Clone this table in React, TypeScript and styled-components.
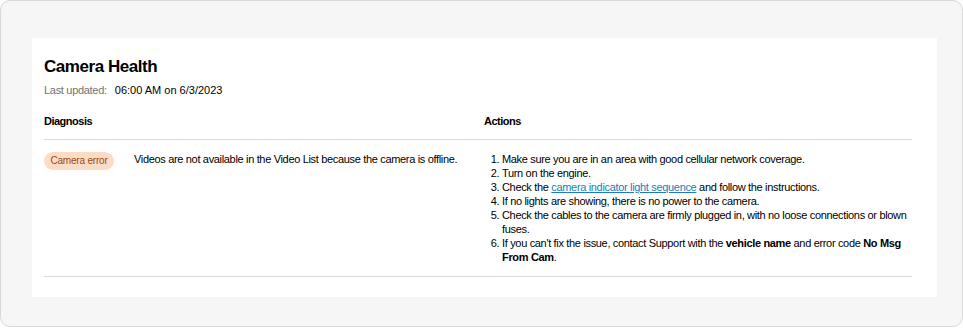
import React from "react";
import styled, { createGlobalStyle } from "styled-components";

const Global = createGlobalStyle`
  html, body { margin: 0; padding: 0; background: #ffffff; }
  body { font-family: "Liberation Sans", Arial, Helvetica, sans-serif; color: #000; }
  * { box-sizing: border-box; }
`;

const Frame = styled.div`
  width: 963px;
  height: 327px;
  background: #f6f6f6;
  border: 1px solid #d9d9d9;
  border-radius: 10px;
  padding: 37px 25px 0 31px;
`;

const Card = styled.section`
  background: #ffffff;
  height: 259px;
  padding: 19px 25px 0 12px;
`;

const Title = styled.h1`
  margin: 0;
  font-size: 17px;
  line-height: 20px;
  font-weight: 700;
  letter-spacing: -0.45px;
`;

const Updated = styled.div`
  margin-top: 6px;
  font-size: 11px;
  line-height: 14px;
  display: flex;
  gap: 8px;
`;

const Muted = styled.span`
  color: #747474;
  letter-spacing: -0.3px;
`;

const Table = styled.div`
  margin-top: 17px;
  display: grid;
  grid-template-columns: 440px 1fr;
`;

const HeadCell = styled.div`
  font-size: 11px;
  line-height: 14px;
  font-weight: 700;
  letter-spacing: -0.5px;
  padding-bottom: 11px;
  border-bottom: 1px solid #dcdcdc;
`;

const Cell = styled.div`
  font-size: 11px;
  line-height: 14px;
  letter-spacing: -0.33px;
  padding: 11px 0 12px;
  border-bottom: 1px solid #dcdcdc;
`;

const DiagnosisCell = styled(Cell)`
  display: flex;
  align-items: flex-start;
  gap: 20px;
`;

const Badge = styled.span`
  flex: none;
  display: inline-flex;
  align-items: center;
  justify-content: center;
  width: 70px;
  height: 18px;
  margin-top: 1px;
  border-radius: 9px;
  background: #fcdcc5;
  color: #9a4a17;
  font-size: 10px;
  letter-spacing: -0.2px;
  white-space: nowrap;
`;

const Description = styled.p`
  margin: 0;
  padding-top: 1px;
`;

const Steps = styled.ol`
  margin: 0;
  padding: 1px 0 0 18px;
`;

const Link = styled.a`
  color: #1b7cc1;
  text-decoration: underline;
`;

export default function App() {
  return (
    <>
      <Global />
      <Frame>
        <Card>
          <Title>Camera Health</Title>
          <Updated>
            <Muted>Last updated:</Muted>
            <span>06:00 AM on 6/3/2023</span>
          </Updated>
          <Table>
            <HeadCell>Diagnosis</HeadCell>
            <HeadCell>Actions</HeadCell>
            <DiagnosisCell>
              <Badge>Camera error</Badge>
              <Description>
                Videos are not available in the Video List because the camera is offline.
              </Description>
            </DiagnosisCell>
            <Cell>
              <Steps>
                <li>Make sure you are in an area with good cellular network coverage.</li>
                <li>Turn on the engine.</li>
                <li>
                  Check the <Link href="#">camera indicator light sequence</Link> and follow the instructions.
                </li>
                <li>If no lights are showing, there is no power to the camera.</li>
                <li>
                  Check the cables to the camera are firmly plugged in, with no loose connections or blown fuses.
                </li>
                <li>
                  If you can't fix the issue, contact Support with the <b>vehicle name</b> and error code{" "}
                  <b>No Msg From Cam</b>.
                </li>
              </Steps>
            </Cell>
          </Table>
        </Card>
      </Frame>
    </>
  );
}
